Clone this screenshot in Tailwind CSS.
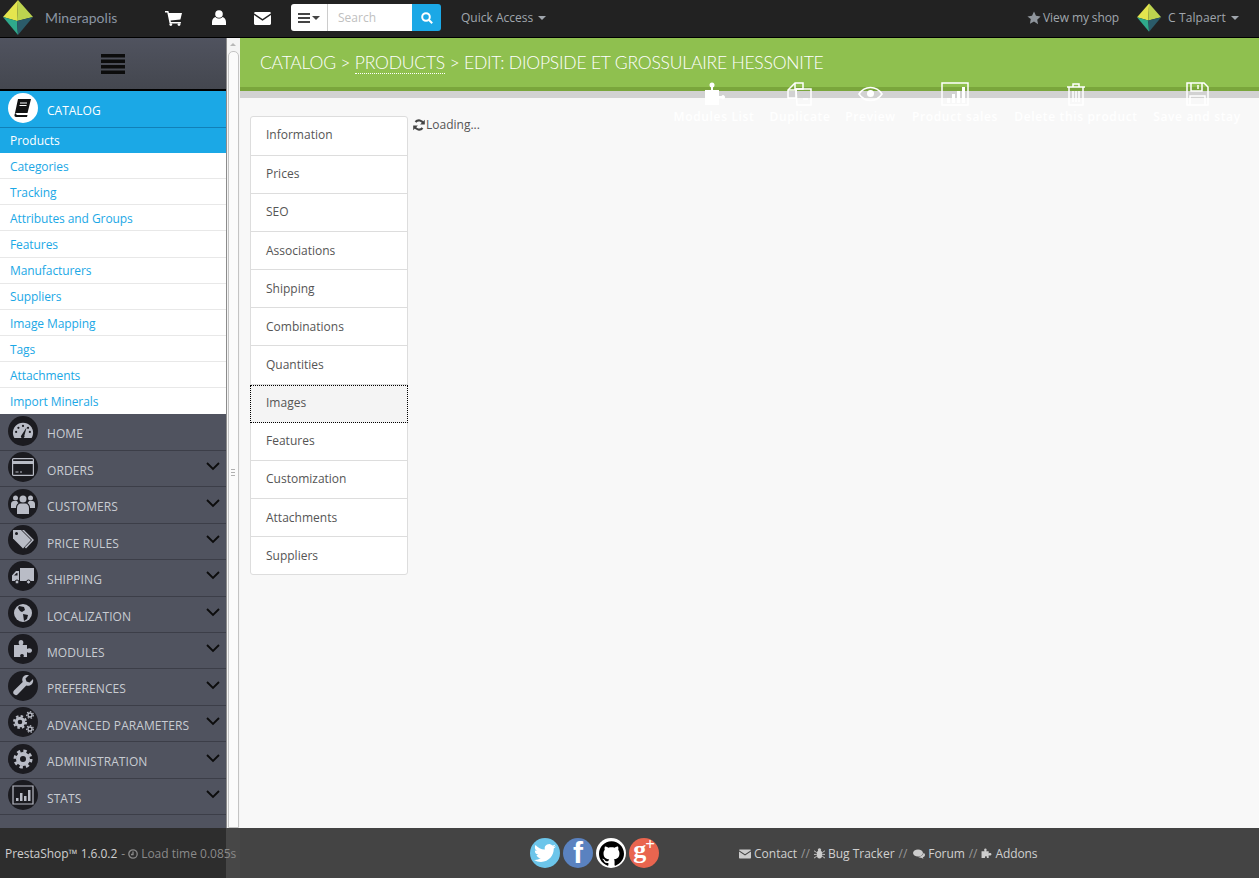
<!DOCTYPE html>
<html lang="en">
<head>
    <meta charset="UTF-8">
    <title>Minerapolis - Products</title>
    <script src="https://cdn.jsdelivr.net/npm/@tailwindcss/browser@4"></script>
</head>
<body class="font-['Open_Sans',sans-serif] text-[12px] overflow-hidden">
<div class="flex flex-col h-[878px] w-[1259px] overflow-hidden bg-white">

    <!-- top bar -->
    <header class="h-[38px] shrink-0 flex items-center pb-[2px] bg-[#222222] border-b border-black text-[#a0a6ad]">
        <svg class="ml-[3px] w-[31px] h-[36px] shrink-0" viewBox="0 0 31 36"><polygon points="15,0 0,17 14,21" fill="#e4e54e"/><polygon points="15,0 30,17 14,21" fill="#bdd44f"/><polygon points="0,17 14,21 15,35" fill="#2fa98b"/><polygon points="30,17 14,21 15,35" fill="#2b5b69"/></svg>
        <span class="ml-[11px] w-[72px] font-['Lato',sans-serif] text-[14px] tracking-[0.05px] text-[#8a95a3]">Minerapolis</span>
        <svg class="ml-[48px] mt-[2px] w-[17px] h-[15px]" viewBox="0 0 17 15" fill="#fff"><path d="M0 0h3.400l.5 2H17l-1.600 6.600-9.800 1 .3 1.400h10v1.400H4.600L2.300 1.400H0z"/><circle cx="5.800" cy="13.600" r="1.400"/><circle cx="14" cy="13.600" r="1.400"/></svg>
        <svg class="ml-[30px] w-[14px] h-[15px]" viewBox="0 0 14 15" fill="#fff"><circle cx="7" cy="4" r="3.800"/><path d="M0 15v-3c0-3 2-4.800 3.500-5 1 1 2.200 1.500 3.500 1.500s2.500-.5 3.500-1.500c1.500.2 3.500 2 3.500 5v3z"/></svg>
        <svg class="ml-[28px] mt-[2px] w-[17px] h-[13px]" viewBox="0 0 17 13" fill="#fff"><path d="M1.500 0h14c.8 0 1.500.6 1.500 1.300L8.500 7 0 1.300C0 .6.700 0 1.500 0z"/><path d="M0 3v8.500c0 .8.700 1.500 1.500 1.500h14c.8 0 1.500-.7 1.500-1.500V3L8.500 8.800z"/></svg>
        <div class="ml-[20px] flex h-[27px] w-[150px] rounded-[3px] overflow-hidden">
            <div class="w-[37px] bg-white border-r border-[#cccccc] flex items-center justify-center gap-[2px]">
                <svg class="w-[12px] h-[10px]" viewBox="0 0 12 10" fill="#444"><path d="M0 0h12v2H0zM0 4h12v2H0zM0 8h12v2H0z"/></svg>
                <span class="w-0 h-0 border-x-[4px] border-x-transparent border-t-[4px] border-t-[#444]"></span>
            </div>
            <div class="w-[84px] bg-white pl-[10px] leading-[27px] text-[12px] text-[#c0c0c0]">Search</div>
            <div class="w-[29px] bg-[#1ba8e6] flex items-center justify-center">
                <svg class="w-[12px] h-[12px]" viewBox="0 0 12 12" fill="none" stroke="#fff" stroke-width="2"><circle cx="5" cy="5" r="3.800"/><path d="M8 8l3.200 3.200"/></svg>
            </div>
        </div>
        <span class="ml-[20px] text-[12px] text-[#a0a6ad]">Quick Access</span>
        <span class="ml-[5px] w-0 h-0 border-x-[4px] border-x-transparent border-t-[4px] border-t-[#a0a6ad]"></span>
        <svg class="ml-auto w-[14px] h-[14px]" viewBox="0 0 24 24" fill="#8f959c"><path d="M12 1l3.400 7.300 7.900 1-5.800 5.500 1.500 7.900L12 17.900l-7 3.800 1.500-7.900L.7 9.300l7.900-1z"/></svg>
        <span class="ml-[2px] text-[12px] tracking-[-0.1px]">View my shop</span>
        <svg class="ml-[18px] w-[25px] h-[30px]" viewBox="0 0 31 36"><polygon points="15,0 0,17 14,21" fill="#e4e54e"/><polygon points="15,0 30,17 14,21" fill="#bdd44f"/><polygon points="0,17 14,21 15,35" fill="#2fa98b"/><polygon points="30,17 14,21 15,35" fill="#2b5b69"/></svg>
        <span class="ml-[6px] text-[12px] tracking-[0.1px]">C Talpaert</span>
        <span class="ml-[5px] mr-[20px] w-0 h-0 border-x-[4px] border-x-transparent border-t-[4px] border-t-[#a0a6ad]"></span>
    </header>

    <div class="flex flex-1 min-h-0">
        <!-- sidebar -->
        <aside class="w-[226px] shrink-0 flex flex-col bg-[#50535f] overflow-hidden">
            <div class="h-[53px] shrink-0 flex items-center justify-center bg-gradient-to-b from-[#50535f] to-[#44474f] border-b-2 border-black">
                <svg class="w-[24px] h-[20px]" viewBox="0 0 24 20" fill="#0c0c0c"><path d="M0 0h24v3.500H0zM0 5.500h24V9H0zM0 11h24v3.500H0zM0 16.500h24V20H0z"/></svg>
            </div>
            <div class="h-[37px] shrink-0 flex items-center bg-[#1ba8e6] border-b border-[#1180b8] text-white">
                <div class="ml-[8px] mb-[2px] w-[30px] h-[30px] rounded-full bg-white flex items-center justify-center">
                    <svg class="w-[20px] h-[20px]" viewBox="0 0 20 20"><path d="M5 1h13l-3.500 14H2z" fill="#111"/><path d="M2 15l-.5 2c-.2 1 .5 2 1.500 2h11l.5-2H4c-.5 0-.7-.5-.5-1z" fill="#111"/><path d="M7 5h7M6.500 7.500h7" stroke="#fff" stroke-width="1"/></svg>
                </div>
                <span class="ml-[9px] text-[12px] mt-[4px]">CATALOG</span>
            </div>
            <a class="h-[25px] shrink-0 flex items-center pl-[10px] bg-[#1ba8e6] text-white">Products</a>
            <ul class="bg-white text-[#1ba8e6] text-[12px] tracking-[-0.08px]">
                <li class="h-[26.15px] pl-[10px] pt-[2px] flex items-center border-b border-[#e8e8e8]">Categories</li>
                <li class="h-[26.15px] pl-[10px] pt-[2px] flex items-center border-b border-[#e8e8e8]">Tracking</li>
                <li class="h-[26.15px] pl-[10px] pt-[2px] flex items-center border-b border-[#e8e8e8]">Attributes and Groups</li>
                <li class="h-[26.15px] pl-[10px] pt-[2px] flex items-center border-b border-[#e8e8e8]">Features</li>
                <li class="h-[26.15px] pl-[10px] pt-[2px] flex items-center border-b border-[#e8e8e8]">Manufacturers</li>
                <li class="h-[26.15px] pl-[10px] pt-[2px] flex items-center border-b border-[#e8e8e8]">Suppliers</li>
                <li class="h-[26.15px] pl-[10px] pt-[3px] flex items-center border-b border-[#e8e8e8]">Image Mapping</li>
                <li class="h-[26.15px] pl-[10px] pt-[2px] flex items-center border-b border-[#e8e8e8]">Tags</li>
                <li class="h-[26.15px] pl-[10px] pt-[2px] flex items-center border-b border-[#e8e8e8]">Attachments</li>
                <li class="h-[26.15px] pl-[10px] pt-[2px] flex items-center">Import Minerals</li>
            </ul>
            <ul class="text-[#c8ccd2] text-[12px] tracking-[0.08px]">
                <li class="h-[36.45px] flex items-center border-b border-[#3c3e48]">
                    <div class="ml-[8px] mb-[3px] w-[30px] h-[30px] rounded-full bg-[#1b1b20] flex items-center justify-center"><svg class="w-[22px] h-[22px]" viewBox="0 0 24 24" fill="#b9bcc6"><path d="M12 3C5.500 3 1 8 1 14c0 2 .6 4 1.600 5.500h18.800C22.400 18 23 16 23 14 23 8 18.500 3 12 3z"/><path d="M16 8l-2.500 9a2 2 0 1 1-3-.7z" fill="#1b1b20"/><g fill="#1b1b20"><circle cx="12" cy="6.500" r="1.200"/><circle cx="7" cy="8.500" r="1.200"/><circle cx="4.500" cy="13" r="1.200"/><circle cx="19.500" cy="13" r="1.200"/><circle cx="17.500" cy="8.500" r="1.200"/></g></svg></div>
                    <span class="ml-[9px] mt-[4.6px]">HOME</span>
                </li>
                <li class="h-[36.45px] flex items-center border-b border-[#3c3e48]">
                    <div class="ml-[8px] mb-[3px] w-[30px] h-[30px] rounded-full bg-[#1b1b20] flex items-center justify-center"><svg class="w-[22px] h-[18px]" viewBox="0 0 22 18" fill="none" stroke="#b9bcc6" stroke-width="1.200"><rect x=".6" y=".6" width="20.800" height="16.800" rx="1"/><path d="M1 4.500h20" stroke-width="3"/><path d="M3.500 14h3M8 14h2"/></svg></div>
                    <span class="ml-[9px] mt-[4.6px]">ORDERS</span>
                    <svg class="ml-auto mr-[6px] -mt-[4px] w-[14px] h-[9px]" viewBox="0 0 14 9" fill="none" stroke="#0c0c0c" stroke-width="1.800"><path d="M1 1l6 6 6-6"/></svg>
                </li>
                <li class="h-[36.45px] flex items-center border-b border-[#3c3e48]">
                    <div class="ml-[8px] mb-[3px] w-[30px] h-[30px] rounded-full bg-[#1b1b20] flex items-center justify-center"><svg class="w-[24px] h-[20px]" viewBox="0 0 24 20" fill="#b9bcc6"><circle cx="12" cy="5" r="3.500"/><circle cx="4.500" cy="4" r="2.500"/><circle cx="19.500" cy="4" r="2.500"/><path d="M6 20v-6c0-3 2-4.500 3.500-4.500h5C16 9.500 18 11 18 14v6z"/><path d="M0 14v-4c0-2 1.500-3 2.500-3H6c.5 1 1 1.500 1.500 2C5.500 10 5 12 5 14zM24 14v-4c0-2-1.500-3-2.500-3H18c-.5 1-1 1.500-1.500 2 2 1 2.500 3 2.500 5z"/></svg></div>
                    <span class="ml-[9px] mt-[4.6px]">CUSTOMERS</span>
                    <svg class="ml-auto mr-[6px] -mt-[4px] w-[14px] h-[9px]" viewBox="0 0 14 9" fill="none" stroke="#0c0c0c" stroke-width="1.800"><path d="M1 1l6 6 6-6"/></svg>
                </li>
                <li class="h-[36.45px] flex items-center border-b border-[#3c3e48]">
                    <div class="ml-[8px] mb-[3px] w-[30px] h-[30px] rounded-full bg-[#1b1b20] flex items-center justify-center"><svg class="w-[23px] h-[21px]" viewBox="0 0 23 21" fill="#b9bcc6"><path d="M1 1h8l10 10-8 8.500L1 9.500z"/><circle cx="4.500" cy="4.500" r="1.500" fill="#1b1b20"/><path d="M12 1l10 10-8 8.500-1.200-1.200L20 11 10 1z"/></svg></div>
                    <span class="ml-[9px] mt-[4.6px]">PRICE RULES</span>
                    <svg class="ml-auto mr-[6px] -mt-[4px] w-[14px] h-[9px]" viewBox="0 0 14 9" fill="none" stroke="#0c0c0c" stroke-width="1.800"><path d="M1 1l6 6 6-6"/></svg>
                </li>
                <li class="h-[36.45px] flex items-center border-b border-[#3c3e48]">
                    <div class="ml-[8px] mb-[3px] w-[30px] h-[30px] rounded-full bg-[#1b1b20] flex items-center justify-center"><svg class="w-[22px] h-[16px]" viewBox="0 0 22 16" fill="#b9bcc6"><path d="M8 0h14v13H8z"/><path d="M7 3H4L0 7.500V13h7zM2 7.500L4.500 5H5.500v2.500z"/><circle cx="5" cy="14" r="2" stroke="#1b1b20"/><circle cx="16.500" cy="14" r="2" stroke="#1b1b20"/></svg></div>
                    <span class="ml-[9px] mt-[4.6px]">SHIPPING</span>
                    <svg class="ml-auto mr-[6px] -mt-[4px] w-[14px] h-[9px]" viewBox="0 0 14 9" fill="none" stroke="#0c0c0c" stroke-width="1.800"><path d="M1 1l6 6 6-6"/></svg>
                </li>
                <li class="h-[36.45px] flex items-center border-b border-[#3c3e48]">
                    <div class="ml-[8px] mb-[3px] w-[30px] h-[30px] rounded-full bg-[#1b1b20] flex items-center justify-center"><svg class="w-[20px] h-[20px]" viewBox="0 0 20 20"><circle cx="10" cy="10" r="9" fill="#b9bcc6"/><path d="M6 3l5 1 1 3-3 2-2-1-2-3zM10 11l5 1-1 4-3 2z" fill="#1b1b20"/></svg></div>
                    <span class="ml-[9px] mt-[4.6px]">LOCALIZATION</span>
                    <svg class="ml-auto mr-[6px] -mt-[4px] w-[14px] h-[9px]" viewBox="0 0 14 9" fill="none" stroke="#0c0c0c" stroke-width="1.800"><path d="M1 1l6 6 6-6"/></svg>
                </li>
                <li class="h-[36.45px] flex items-center border-b border-[#3c3e48]">
                    <div class="ml-[8px] mb-[3px] w-[30px] h-[30px] rounded-full bg-[#1b1b20] flex items-center justify-center"><svg class="w-[20px] h-[20px]" viewBox="0 0 20 20" fill="#b9bcc6"><path d="M1 6h5.500C5 4 5.500 1 8 1s3 3 1.500 5H14v4c1.500-1.500 5-1 5 1.500S15.500 14.500 14 13v5h-3.500c1-2-.2-3-1.500-3s-2.500 1-1.500 3H1z"/></svg></div>
                    <span class="ml-[9px] mt-[4.6px]">MODULES</span>
                    <svg class="ml-auto mr-[6px] -mt-[4px] w-[14px] h-[9px]" viewBox="0 0 14 9" fill="none" stroke="#0c0c0c" stroke-width="1.800"><path d="M1 1l6 6 6-6"/></svg>
                </li>
                <li class="h-[36.45px] flex items-center border-b border-[#3c3e48]">
                    <div class="ml-[8px] mb-[3px] w-[30px] h-[30px] rounded-full bg-[#1b1b20] flex items-center justify-center"><svg class="w-[21px] h-[21px]" viewBox="0 0 21 21" fill="#b9bcc6"><path d="M20 4l-3.500 3.500-3-1-1-3L16 0c-3-.8-6.500 1-6.800 4.500 0 1 .2 1.800.5 2.500L1 15.500c-1.200 1.200-1 2.800 0 3.800s2.700 1.200 3.800 0l8.500-8.700c3.500 1.200 7.800-1.800 6.700-6.600z"/></svg></div>
                    <span class="ml-[9px] mt-[4.6px]">PREFERENCES</span>
                    <svg class="ml-auto mr-[6px] -mt-[4px] w-[14px] h-[9px]" viewBox="0 0 14 9" fill="none" stroke="#0c0c0c" stroke-width="1.800"><path d="M1 1l6 6 6-6"/></svg>
                </li>
                <li class="h-[36.45px] flex items-center border-b border-[#3c3e48]">
                    <div class="ml-[8px] mb-[3px] w-[30px] h-[30px] rounded-full bg-[#1b1b20] flex items-center justify-center"><svg class="w-[24px] h-[24px]" viewBox="0 0 24 24" fill="none" stroke="#b9bcc6"><circle cx="9" cy="12" r="3.800" stroke-width="3"/><circle cx="9" cy="12" r="6" stroke-width="2" stroke-dasharray="2.500 2.200"/><circle cx="19" cy="5" r="2" stroke-width="1.300"/><circle cx="19" cy="5" r="3.300" stroke-width="1.200" stroke-dasharray="1.500 1.500"/><circle cx="19" cy="19" r="2" stroke-width="1.300"/><circle cx="19" cy="19" r="3.300" stroke-width="1.200" stroke-dasharray="1.500 1.500"/></svg></div>
                    <span class="ml-[9px] mt-[4.6px]">ADVANCED PARAMETERS</span>
                    <svg class="ml-auto mr-[6px] -mt-[4px] w-[14px] h-[9px]" viewBox="0 0 14 9" fill="none" stroke="#0c0c0c" stroke-width="1.800"><path d="M1 1l6 6 6-6"/></svg>
                </li>
                <li class="h-[36.45px] flex items-center border-b border-[#3c3e48]">
                    <div class="ml-[8px] mb-[3px] w-[30px] h-[30px] rounded-full bg-[#1b1b20] flex items-center justify-center"><svg class="w-[20px] h-[20px]" viewBox="0 0 20 20" fill="none" stroke="#b9bcc6"><circle cx="10" cy="10" r="5" stroke-width="4"/><circle cx="10" cy="10" r="8" stroke-width="3" stroke-dasharray="3.300 3"/></svg></div>
                    <span class="ml-[9px] mt-[4.6px]">ADMINISTRATION</span>
                    <svg class="ml-auto mr-[6px] -mt-[4px] w-[14px] h-[9px]" viewBox="0 0 14 9" fill="none" stroke="#0c0c0c" stroke-width="1.800"><path d="M1 1l6 6 6-6"/></svg>
                </li>
                <li class="h-[36.45px] flex items-center border-b border-[#3c3e48]">
                    <div class="ml-[8px] mb-[3px] w-[30px] h-[30px] rounded-full bg-[#1b1b20] flex items-center justify-center"><svg class="w-[22px] h-[20px]" viewBox="0 0 22 20" fill="#b9bcc6"><path d="M1 1h20v18H1z" fill="none" stroke="#b9bcc6" stroke-width="1.200"/><path d="M4 13h2.500v3H4zM8 8h2.500v8H8zM12 11h2.500v5H12zM16 5h2.500v11H16z"/></svg></div>
                    <span class="ml-[9px] mt-[4.6px]">STATS</span>
                    <svg class="ml-auto mr-[6px] -mt-[4px] w-[14px] h-[9px]" viewBox="0 0 14 9" fill="none" stroke="#0c0c0c" stroke-width="1.800"><path d="M1 1l6 6 6-6"/></svg>
                </li>
            </ul>
        </aside>

        <!-- sidebar scrollbar -->
        <div class="w-[14px] shrink-0 relative bg-[#f4f4f4] border-l border-[#8c8c8c] border-r-[#d0d0d0]">
            <span class="absolute left-[3px] top-[5px] w-0 h-0 border-x-[3px] border-x-transparent border-b-[3px] border-b-[#b8b8b8]"></span>
            <div class="absolute left-[1px] top-[13px] bottom-0 w-[11px] rounded-t-[5px] border border-[#c4c4c4] bg-[#fbfbfb]"></div>
            <div class="absolute left-[4px] top-[431px] w-[4px] h-[8px] bg-[repeating-linear-gradient(#b0b0b0_0_1px,#fbfbfb_1px_3px)]"></div>
        </div>

        <!-- main -->
        <main class="flex-1 relative bg-[#f8f8f8] min-w-0">
            <div class="h-[49px] bg-[#8fc04f] pl-[20px] pt-[2px] flex items-center font-['Lato',sans-serif] font-light text-[17.5px] text-white tracking-[-0.21px]">
                <span>CATALOG &gt; <span class="border-b border-dotted border-white">PRODUCTS</span> &gt; EDIT: DIOPSIDE ET GROSSULAIRE HESSONITE</span>
            </div>
            <div class="h-[4px] bg-[#7aa63c]"></div>
            <div class="h-[7px] bg-[#d2d2d2]"></div>

            <div class="flex items-start pl-[10px] pt-[18px]">
                <ul class="w-[158px] shrink-0 bg-white border border-[#dddddd] rounded-[3px] text-[12px] text-[#555555]">
                    <li class="h-[38.7px] flex items-center pl-[15px] pb-[1px] border-b border-[#dddddd]">Information</li>
                    <li class="h-[38.15px] flex items-center pl-[15px] border-b border-[#dddddd]">Prices</li>
                    <li class="h-[38.15px] flex items-center pl-[15px] border-b border-[#dddddd]">SEO</li>
                    <li class="h-[38.15px] flex items-center pl-[15px] border-b border-[#dddddd]">Associations</li>
                    <li class="h-[38.15px] flex items-center pl-[15px] border-b border-[#dddddd]">Shipping</li>
                    <li class="h-[38.15px] flex items-center pl-[15px] border-b border-[#dddddd]">Combinations</li>
                    <li class="h-[38.15px] flex items-center pl-[15px] border-b border-[#dddddd]">Quantities</li>
                    <li class="h-[38.15px] flex items-center pl-[15px] pb-[1px] bg-[#f4f4f4] border border-dotted border-black -ml-px -mr-px">Images</li>
                    <li class="h-[38.15px] flex items-center pl-[15px] border-b border-[#dddddd]">Features</li>
                    <li class="h-[38.15px] flex items-center pl-[15px] border-b border-[#dddddd]">Customization</li>
                    <li class="h-[38.15px] flex items-center pl-[15px] border-b border-[#dddddd]">Attachments</li>
                    <li class="h-[37px] flex items-center pl-[15px] pt-[1px]">Suppliers</li>
                </ul>
                <div class="ml-[5px] flex items-center gap-[1px] text-[12px] text-[#555555] leading-[18px]">
                    <svg class="w-[12px] h-[12px]" viewBox="0 0 12 12" fill="none" stroke="#444" stroke-width="2.200"><path d="M10.300 4.500A4.600 4.600 0 0 0 2.500 3M1.700 7.500a4.600 4.600 0 0 0 7.800 1.500"/><path d="M11.800.8v4.700H7.100zM.2 11.200V6.500h4.700z" stroke="none" fill="#444"/></svg>
                    <span>Loading...</span>
                </div>
            </div>

            <!-- toolbar sits over the header, white on the pale page -->
            <div class="absolute top-[44px] right-[18px] flex gap-[15px] text-white text-[12px] font-semibold tracking-[0.65px]">
                <div class="flex flex-col items-center w-[82px] gap-[2px]">
                    <svg class="w-[24px] h-[24px]" viewBox="0 0 24 24" fill="#fff"><circle cx="10" cy="3" r="2.500"/><path d="M9 5h2v3h6v6h2.500a2 2 0 1 1 0 2.500H17V23H3V8h6z"/></svg>
                    <span>Modules List</span>
                </div>
                <div class="flex flex-col items-center w-[60px] gap-[2px]">
                    <svg class="w-[26px] h-[24px]" viewBox="0 0 26 24" fill="none" stroke="#fff" stroke-width="1.500"><path d="M8 1h8v6h-7v9H1V8z"/><path d="M9 7h9l6 0v16H10z"/><path d="M8 1v7H1M16 17h5"/></svg>
                    <span>Duplicate</span>
                </div>
                <div class="flex flex-col items-center w-[51px] gap-[2px]">
                    <svg class="w-[25px] h-[24px]" viewBox="0 0 25 24" fill="none" stroke="#fff" stroke-width="1.600"><path d="M1 12C4 7.500 8.500 5.500 12.500 5.500S21 7.500 24 12c-3 4.500-7.500 6.500-11.500 6.500S4 16.500 1 12z"/><circle cx="12.500" cy="11.500" r="3.500" fill="#fff" stroke="none"/></svg>
                    <span>Preview</span>
                </div>
                <div class="flex flex-col items-center w-[88px] gap-[2px]">
                    <svg class="w-[28px] h-[24px]" viewBox="0 0 28 24" fill="#fff"><path d="M1 1h26v22H1z" fill="none" stroke="#fff" stroke-width="1.500"/><path d="M6 16h3v5H6zM11 12h3v9h-3zM16 9h3v12h-3zM21 5h3v16h-3z"/></svg>
                    <span>Product sales</span>
                </div>
                <div class="flex flex-col items-center w-[124px] gap-[2px]">
                    <svg class="w-[20px] h-[24px]" viewBox="0 0 20 24" fill="none" stroke="#fff" stroke-width="1.500"><path d="M1 5h18M7 5V2h6v3M3 5v18h14V5M7 9v11M10 9v11M13 9v11"/></svg>
                    <span>Delete this product</span>
                </div>
                <div class="flex flex-col items-center w-[88px] gap-[2px]">
                    <svg class="w-[23px] h-[24px]" viewBox="0 0 23 24" fill="none" stroke="#fff" stroke-width="1.500"><path d="M1 1h17l4 4v18H1z"/><path d="M5 1v8h11V1M4 23V14h15v9M12 3v4"/></svg>
                    <span>Save and stay</span>
                </div>
            </div>
        </main>
    </div>

    <!-- footer -->
    <footer class="h-[50px] shrink-0 flex items-center bg-[#444444] text-[12px] text-[#c8c8c8]">
        <div class="w-[240px] shrink-0 h-full flex items-center pl-[5px] pt-[1px] bg-[linear-gradient(90deg,#2d2d2d_226px,#474747_226px)] whitespace-nowrap">
            <span class="text-[#cfcfcf] tracking-[-0.05px]">PrestaShop™ 1.6.0.2</span>
            <span class="ml-[4px] text-[#8a8a8a]">-</span>
            <svg class="ml-[3px] shrink-0 w-[10px] h-[10px]" viewBox="0 0 10 10" fill="none" stroke="#8a8a8a" stroke-width="1.300"><circle cx="5" cy="5" r="4.200"/><path d="M5 2.500V5.500H3"/></svg>
            <span class="ml-[3px] text-[#8a8a8a]">Load time 0.085s</span>
        </div>
        <div class="ml-[290px] flex gap-[3px]">
            <div class="w-[30px] h-[30px] rounded-full bg-[#6cc5ea] flex items-center justify-center"><svg class="w-[22px] h-[22px]" viewBox="0 0 24 24" fill="#fff"><path d="M23.953 4.570a10 10 0 01-2.825.775 4.958 4.958 0 002.163-2.723c-.951.555-2.005.959-3.127 1.184a4.920 4.920 0 00-8.384 4.482C7.690 8.095 4.067 6.130 1.640 3.162a4.822 4.822 0 00-.666 2.475c0 1.710.870 3.213 2.188 4.096a4.904 4.904 0 01-2.228-.616v.060a4.923 4.923 0 003.946 4.827 4.996 4.996 0 01-2.212.085 4.936 4.936 0 004.604 3.417 9.867 9.867 0 01-6.102 2.105c-.390 0-.779-.023-1.170-.067a13.995 13.995 0 007.557 2.209c9.053 0 13.998-7.496 13.998-13.985 0-.210 0-.420-.015-.630A9.935 9.935 0 0024 4.590z"/></svg></div>
            <div class="w-[30px] h-[30px] rounded-full bg-[#5a82c0] flex items-center justify-center font-['Liberation_Sans',sans-serif] font-bold text-[30px] leading-[30px] text-white">f</div>
            <div class="w-[30px] h-[30px] rounded-full bg-white flex items-center justify-center"><svg class="w-[25px] h-[25px]" viewBox="0 0 24 24" fill="#000"><path d="M12 .297c-6.630 0-12 5.373-12 12 0 5.303 3.438 9.800 8.205 11.385.600.113.820-.258.820-.577 0-.285-.010-1.040-.015-2.040-3.338.724-4.042-1.610-4.042-1.610C4.422 18.070 3.633 17.700 3.633 17.700c-1.087-.744.084-.729.084-.729 1.205.084 1.838 1.236 1.838 1.236 1.070 1.835 2.809 1.305 3.495.998.108-.776.417-1.305.760-1.605-2.665-.300-5.466-1.332-5.466-5.930 0-1.310.465-2.380 1.235-3.220-.135-.303-.540-1.523.105-3.176 0 0 1.005-.322 3.300 1.230.960-.267 1.980-.399 3-.405 1.020.006 2.040.138 3 .405 2.280-1.552 3.285-1.230 3.285-1.230.645 1.653.240 2.873.120 3.176.765.840 1.230 1.910 1.230 3.220 0 4.610-2.805 5.625-5.475 5.920.420.360.810 1.096.810 2.220 0 1.606-.015 2.896-.015 3.286 0 .315.210.690.825.570C20.565 22.092 24 17.592 24 12.297c0-6.627-5.373-12-12-12"/></svg></div>
            <div class="w-[30px] h-[30px] rounded-full bg-[#e9654f] flex items-start justify-center font-['Liberation_Serif',serif] font-bold text-white">
                <span class="text-[26px] leading-[24px]">g</span><span class="text-[17px] leading-[14px] -ml-[1px]">+</span>
            </div>
        </div>
        <div class="ml-[80px] flex items-center whitespace-nowrap text-[#d0d0d0] pt-[1px]">
            <svg class="w-[12px] h-[10px]" viewBox="0 0 17 13" fill="#ccc"><path d="M1.500 0h14c.8 0 1.500.6 1.500 1.300L8.500 7 0 1.300C0 .6.700 0 1.500 0z"/><path d="M0 3v8.500c0 .8.700 1.500 1.500 1.500h14c.8 0 1.500-.7 1.500-1.500V3L8.500 8.800z"/></svg>
            <span class="ml-[3px]">Contact</span>
            <span class="ml-[4px] text-[#999]">//</span>
            <svg class="ml-[4px] w-[11px] h-[11px]" viewBox="0 0 12 12" fill="#ccc"><ellipse cx="6" cy="7" rx="3" ry="4.500"/><circle cx="6" cy="2" r="1.800"/><path d="M0 3l3 2M12 3L9 5M0 7h3M12 7H9M0 11l3-2M12 11L9 9" stroke="#ccc"/></svg>
            <span class="ml-[3px]">Bug Tracker</span>
            <span class="ml-[4px] text-[#999]">//</span>
            <svg class="ml-[6px] w-[12px] h-[10px]" viewBox="0 0 12 10" fill="#ccc"><ellipse cx="5" cy="4" rx="5" ry="3.500"/><path d="M12 6c0-1-.5-1.700-1.500-2.200 0 2-2.500 4-5.500 4 1 .8 2 1 3 1l2.500 1-.7-1.500C11 8 12 7 12 6z"/></svg>
            <span class="ml-[3px] tracking-[-0.1px]">Forum</span>
            <span class="ml-[4px] text-[#999]">//</span>
            <svg class="ml-[4px] w-[11px] h-[11px]" viewBox="0 0 20 20" fill="#ccc"><path d="M1 6h5.500C5 4 5.500 1 8 1s3 3 1.500 5H14v4c1.500-1.500 5-1 5 1.500S15.500 14.500 14 13v5h-3.500c1-2-.2-3-1.500-3s-2.500 1-1.500 3H1z"/></svg>
            <span class="ml-[3px] tracking-[-0.1px]">Addons</span>
        </div>
    </footer>
</div>
</body>
</html>
